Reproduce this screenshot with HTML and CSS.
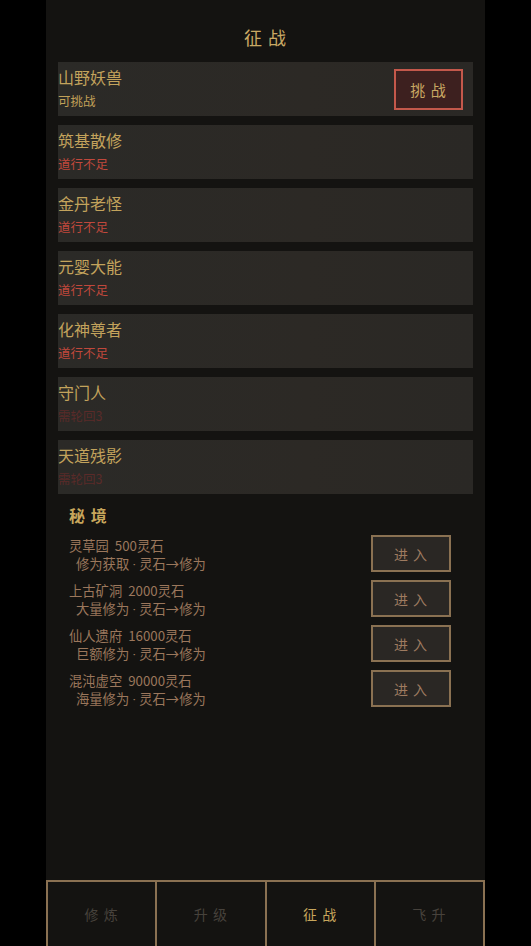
FILE: index.html
```html
<!DOCTYPE html>
<html lang="zh">
<head>
<meta charset="utf-8">
<title>征战</title>
<link rel="stylesheet" href="styles.css">
</head>
<body>
<div class="panel">
  <div class="content">
    <h1 class="title">征 战</h1>
    <div class="cards">
      <div class="card">
        <div class="info">
          <div class="name">山野妖兽</div>
          <div class="status ok">可挑战</div>
        </div>
        <button class="fight">挑 战</button>
      </div>
      <div class="card">
        <div class="info">
          <div class="name">筑基散修</div>
          <div class="status lack">道行不足</div>
        </div>
      </div>
      <div class="card">
        <div class="info">
          <div class="name">金丹老怪</div>
          <div class="status lack">道行不足</div>
        </div>
      </div>
      <div class="card">
        <div class="info">
          <div class="name">元婴大能</div>
          <div class="status lack">道行不足</div>
        </div>
      </div>
      <div class="card">
        <div class="info">
          <div class="name">化神尊者</div>
          <div class="status lack">道行不足</div>
        </div>
      </div>
      <div class="card">
        <div class="info">
          <div class="name">守门人</div>
          <div class="status locked">需轮回3</div>
        </div>
      </div>
      <div class="card">
        <div class="info">
          <div class="name">天道残影</div>
          <div class="status locked">需轮回3</div>
        </div>
      </div>
    </div>
    <section class="realm">
      <h2 class="realm-title">秘 境</h2>
      <div class="realm-list">
        <div class="realm-row">
          <div class="realm-text">
            <div class="line1">灵草园&nbsp;&nbsp;500灵石</div>
            <div class="line2">修为获取<span class="dot"> · </span>灵石→修为</div>
          </div>
          <button class="enter">进 入</button>
        </div>
        <div class="realm-row">
          <div class="realm-text">
            <div class="line1">上古矿洞&nbsp;&nbsp;2000灵石</div>
            <div class="line2">大量修为<span class="dot"> · </span>灵石→修为</div>
          </div>
          <button class="enter">进 入</button>
        </div>
        <div class="realm-row">
          <div class="realm-text">
            <div class="line1">仙人遗府&nbsp;&nbsp;16000灵石</div>
            <div class="line2">巨额修为<span class="dot"> · </span>灵石→修为</div>
          </div>
          <button class="enter">进 入</button>
        </div>
        <div class="realm-row">
          <div class="realm-text">
            <div class="line1">混沌虚空&nbsp;&nbsp;90000灵石</div>
            <div class="line2">海量修为<span class="dot"> · </span>灵石→修为</div>
          </div>
          <button class="enter">进 入</button>
        </div>
      </div>
    </section>
  </div>
  <nav class="tabs">
    <div class="tab">修 炼</div>
    <div class="tab">升 级</div>
    <div class="tab active">征 战</div>
    <div class="tab">飞 升</div>
  </nav>
</div>
</body>
</html>
```

FILE: styles.css
```css
html, body {
  margin: 0;
  padding: 0;
  background: #000;
  height: 946px;
  overflow: hidden;
}

body {
  font-family: "Noto Sans CJK SC", "Noto Sans", sans-serif;
}

.panel {
  width: 439px;
  height: 946px;
  margin: 0 auto;
  background: #141311;
  display: flex;
  flex-direction: column;
}

.content {
  flex: 1;
  padding: 25px 12px 0;
}

.title {
  margin: 0 0 13px;
  text-align: center;
  font-size: 18px;
  line-height: 24px;
  font-weight: normal;
  letter-spacing: 1px;
  color: #c9a964;
}

.cards {
  display: flex;
  flex-direction: column;
  gap: 9px;
}

.card {
  height: 54px;
  box-sizing: border-box;
  background: linear-gradient(90deg, #2b2a27 0%, #2c2925 60%, #2a2825 100%);
  display: flex;
  align-items: center;
  justify-content: space-between;
  padding-right: 10px;
}

.info {
  display: flex;
  flex-direction: column;
  gap: 4px;
  margin-top: -1px;
}

.name {
  font-size: 16px;
  line-height: 20px;
  color: #c3a35c;
}

.status {
  font-size: 12.5px;
  line-height: 20px;
}

.status.ok { color: #c1a057; }
.status.lack { color: #c0483c; }
.status.locked { color: #5a2b29; }

.fight {
  width: 69px;
  height: 41px;
  box-sizing: border-box;
  border: 2px solid #c4584b;
  background: #3d201f;
  color: #c9a863;
  font-family: inherit;
  font-size: 15px;
  letter-spacing: 1px;
  padding: 0;
}

.realm {
  padding: 11px 22px 0 11px;
}

.realm-title {
  margin: 0 0 10px;
  font-size: 16px;
  line-height: 20px;
  font-weight: bold;
  letter-spacing: 1px;
  color: #c7a65c;
}

.realm-list {
  display: flex;
  flex-direction: column;
  gap: 8px;
}

.realm-row {
  height: 37px;
  display: flex;
  align-items: center;
  justify-content: space-between;
}

.realm-text {
  font-size: 13.3px;
  line-height: 18px;
  color: #9b775c;
  padding-top: 4px;
}

.line2 {
  padding-left: 7px;
}

.dot {
  font-family: Roboto, "Liberation Sans", sans-serif;
}

.enter {
  width: 80px;
  height: 37px;
  box-sizing: border-box;
  border: 2px solid #8a7152;
  background: #2a2724;
  color: #9e7b60;
  font-family: inherit;
  font-size: 14px;
  letter-spacing: 1px;
  padding: 0;
}

.tabs {
  height: 66px;
  display: grid;
  grid-template-columns: repeat(4, 1fr);
  border-top: 2px solid #8a7152;
  border-right: 2px solid #8a7152;
  box-sizing: border-box;
}

.tab {
  border-left: 2px solid #8a7152;
  display: flex;
  align-items: center;
  justify-content: center;
  font-size: 14px;
  letter-spacing: 1px;
  color: #47423c;
}

.tab.active {
  color: #c7a65c;
}
```
